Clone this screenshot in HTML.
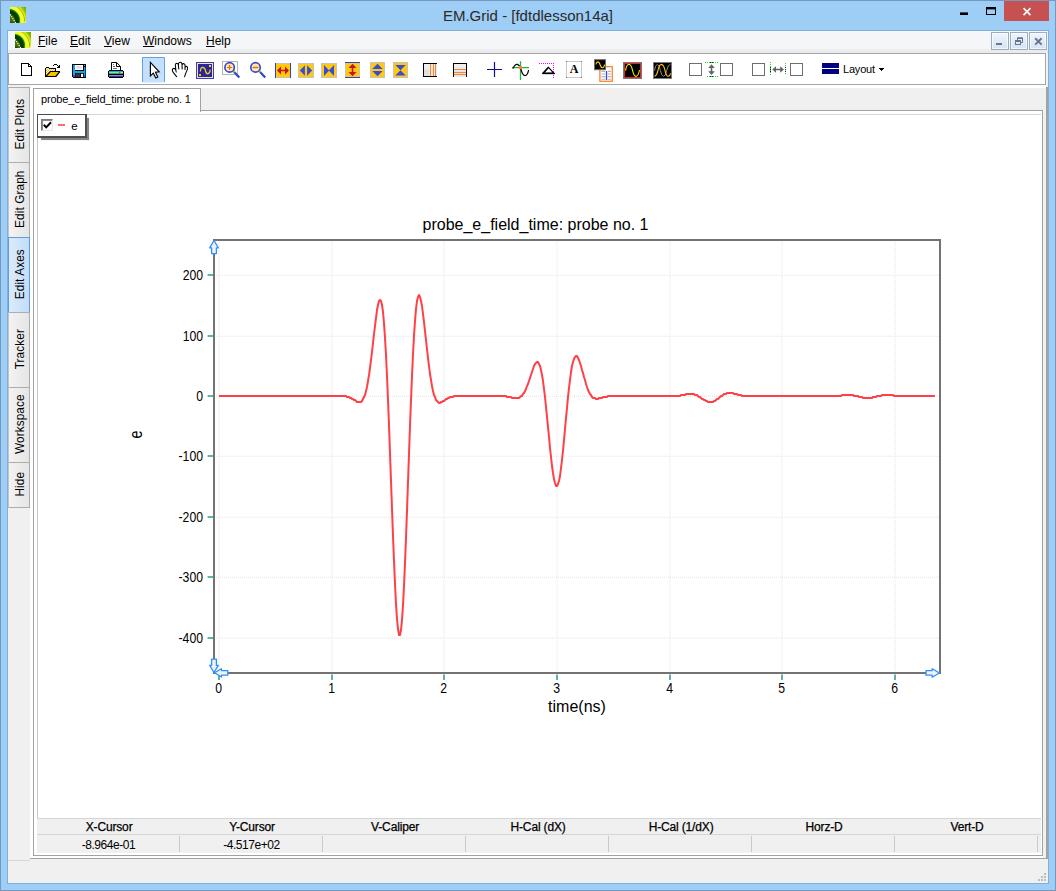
<!DOCTYPE html>
<html lang="en">
<head>
<meta charset="utf-8">
<title>EM.Grid - [fdtdlesson14a]</title>
<style>
*{box-sizing:border-box;margin:0;padding:0}
html,body{width:1056px;height:891px;overflow:hidden;background:#9ecdf5;font-family:"Liberation Sans",sans-serif;color:#000}
div,span,svg{position:absolute}
#frame{left:0;top:0;width:1056px;height:891px;border:1px solid #7399c0;background:#9ecdf5}
#frame2{left:7px;top:30px;width:1042px;height:854px;border:1px solid #82afd9}
#title{left:0;top:6px;color:#2a2a2a;width:1056px;text-align:center;font-size:15px;line-height:20px;white-space:nowrap}
#client{left:8px;top:31px;width:1040px;height:852px;background:#f0f0f0}
#menubar{left:8px;top:31px;width:1040px;height:22px;background:linear-gradient(#f5f6f7 0,#f5f6f7 18px,#eaebec 19px,#eaebec 22px)}
.mi{top:34px;font-size:12px;line-height:15px;white-space:nowrap}
.mi u{text-decoration:underline;text-underline-offset:1px}
.mdi{top:32px;width:18px;height:18px;border:1px solid #9dadc1;background:linear-gradient(#eff5fc,#d6e3f2);box-shadow:inset 0 0 0 1px rgba(255,255,255,0.65)}
#toolbar{left:8px;top:53px;width:1038px;height:32px;background:#fff;border:1px solid #a6a6a6}
#tbr{left:1046px;top:53px;width:2px;height:33px;background:#f4f3f2}
#mdiwhite{left:30px;top:85px;width:1016px;height:773px;background:#fff}
#mdiright{left:1046px;top:87px;width:2px;height:772px;background:#a2a2a2}
#mdibottom{left:30px;top:858px;width:1018px;height:1px;background:#a2a2a2}
.vtab{left:8px;width:22px;border:1px solid #adadad;border-left-color:#c4c4c4;background:linear-gradient(90deg,#f3f3f3,#e5e5e5)}
.vtab.sel{border-color:#5c9de3;background:linear-gradient(90deg,#dcebfc,#c3dcf9)}
.vtab span{left:50%;top:50%;white-space:nowrap;font-size:13.5px;line-height:14px;transform:translate(-50%,-50%) translate(1.2px,-0.8px) rotate(-90deg) scaleX(0.875);letter-spacing:0.1px}
#tabstrip{left:201px;top:88px;width:845px;height:23px;background:#f0f0f0}
#tabstripb{left:201px;top:110px;width:842px;height:1px;background:#a2a2a2}
#pagesideR{left:1043px;top:110px;width:3px;height:748px;background:#f1f1f1}
#toptab{left:33px;top:88px;width:168px;height:24px;background:#fff;border:1px solid #a2a2a2;border-bottom:none}
#toptab span{left:7px;top:3px;font-size:11px;line-height:14px;white-space:nowrap;letter-spacing:-0.18px}
#pageL{left:33px;top:111px;width:1px;height:745px;background:#a2a2a2}
#pageR{left:1042px;top:110px;width:1px;height:746px;background:#a2a2a2}
#pageB{left:33px;top:855px;width:1010px;height:1px;background:#a2a2a2}
#graph{left:37px;top:114px;width:1004px;height:704px;background:#fff;border-top:1px solid #d6d6d6;border-left:1px solid #c6c6c6}
#legend{left:37px;top:114px;width:50px;height:24px;background:#fff;border:1px solid #4e4e4e;border-right-width:2px;border-bottom-width:2px;}
.lsh{background:#858585;box-shadow:0 0 1px #a8a8a8}
#cb{left:3px;top:4px;width:12px;height:12px;background:#fff;border:1px solid #7a7a7a;border-right-color:#e8e8e8;border-bottom-color:#e8e8e8;box-shadow:inset 1px 1px 0 #8a8a8a}
#ldash{left:19.5px;top:9.3px;width:7px;height:2px;background:#ff6b6b}
#le{left:33.2px;top:2.6px;font-size:11.5px;line-height:16px}
#tblhead{left:37px;top:818px;width:1004px;height:17px;background:#f0f0f0;border-top:1px solid #d5d5d5;border-bottom:1px solid #d5d5d5}
#tblrow{left:37px;top:835px;width:1004px;height:18px;background:#f0f0f0}
.th{top:820px;width:143px;text-align:center;font-size:12px;line-height:14px;white-space:nowrap;-webkit-text-stroke:0.25px #000;margin-left:0.6px;letter-spacing:-0.15px}
.td{top:838px;width:143px;text-align:center;font-size:12px;line-height:14px;white-space:nowrap;letter-spacing:-0.45px}
.sep{top:836px;width:1px;height:16px;background:#c9c9c9}
#status{left:8px;top:859px;width:1040px;height:24px;background:#f0f0f0}
#statusline{left:8px;top:860px;width:22px;height:1px;background:#d7d7d7}
#layout{left:843px;top:62px;font-size:11px;line-height:14px;letter-spacing:-0.2px;white-space:nowrap}
#iconA{left:566px;top:61px;width:16px;height:17px;text-align:center;font-family:"Liberation Serif",serif;font-weight:bold;font-size:12px;line-height:17px}
</style>
</head>
<body>
<div id="frame"></div><div id="frame2"></div>
<svg style="left:10px;top:7px" width="16" height="16" viewBox="0 0 16 16">
<defs><radialGradient id="ig1" gradientUnits="userSpaceOnUse" cx="-1.600" cy="13.500" r="22.500">
<stop offset="0" stop-color="#4c7c00"/><stop offset="0.26" stop-color="#426e00"/><stop offset="0.32" stop-color="#0a4000"/><stop offset="0.44" stop-color="#033800"/>
<stop offset="0.475" stop-color="#0c6800"/><stop offset="0.505" stop-color="#24a400"/><stop offset="0.535" stop-color="#d8f020"/><stop offset="0.57" stop-color="#fcfc34"/><stop offset="0.675" stop-color="#f4f82c"/>
<stop offset="0.715" stop-color="#98c000"/><stop offset="0.745" stop-color="#dcf028"/><stop offset="0.79" stop-color="#b4de08"/><stop offset="0.85" stop-color="#8abe00"/><stop offset="1" stop-color="#6c9c00"/>
</radialGradient></defs>
<rect width="16" height="16" fill="url(#ig1)"/>
<path d="M0 7.300 L5.800 16" stroke="#fff" stroke-width="1.100" stroke-dasharray="1.300 1" fill="none"/>
<rect x="0" y="14.400" width="2.600" height="1.600" fill="#3a2c30" opacity="0.8"/>
<rect x="14.400" y="14" width="1.600" height="2" fill="#fff8c0" opacity="0.7"/>
</svg>
<div id="title">EM.Grid - [fdtdlesson14a]</div>
<svg style="left:950px;top:0" width="106" height="31" viewBox="950 0 106 31">
<rect x="960" y="12.4" width="8" height="2.6" fill="#000"/>
<rect x="986.5" y="8" width="9" height="6.5" fill="none" stroke="#000" stroke-width="1"/><rect x="986" y="7" width="10" height="2.4" fill="#000"/>
<rect x="1004" y="1" width="45" height="20" fill="#c75050"/>
<path d="M1023.500 8.200 L1030.500 15.100 M1030.500 8.200 L1023.500 15.100" stroke="#fff" stroke-width="1.650" fill="none"/>
</svg>
<div id="client"></div>
<div id="menubar"></div>
<svg style="left:15px;top:32px" width="16" height="16" viewBox="0 0 16 16">
<defs><radialGradient id="ig2" gradientUnits="userSpaceOnUse" cx="-1.600" cy="13.500" r="22.500">
<stop offset="0" stop-color="#4c7c00"/><stop offset="0.26" stop-color="#426e00"/><stop offset="0.32" stop-color="#0a4000"/><stop offset="0.44" stop-color="#033800"/>
<stop offset="0.475" stop-color="#0c6800"/><stop offset="0.505" stop-color="#24a400"/><stop offset="0.535" stop-color="#d8f020"/><stop offset="0.57" stop-color="#fcfc34"/><stop offset="0.675" stop-color="#f4f82c"/>
<stop offset="0.715" stop-color="#98c000"/><stop offset="0.745" stop-color="#dcf028"/><stop offset="0.79" stop-color="#b4de08"/><stop offset="0.85" stop-color="#8abe00"/><stop offset="1" stop-color="#6c9c00"/>
</radialGradient></defs>
<rect width="16" height="16" fill="url(#ig2)"/>
<path d="M0 7.300 L5.800 16" stroke="#fff" stroke-width="1.100" stroke-dasharray="1.300 1" fill="none"/>
<rect x="0" y="14.400" width="2.600" height="1.600" fill="#3a2c30" opacity="0.8"/>
<rect x="14.400" y="14" width="1.600" height="2" fill="#fff8c0" opacity="0.7"/>
</svg>
<span class="mi" style="left:38px"><u>F</u>ile</span>
<span class="mi" style="left:70px"><u>E</u>dit</span>
<span class="mi" style="left:104px"><u>V</u>iew</span>
<span class="mi" style="left:143px"><u>W</u>indows</span>
<span class="mi" style="left:206px"><u>H</u>elp</span>
<div class="mdi" style="left:991px"></div><div class="mdi" style="left:1010px"></div><div class="mdi" style="left:1029px"></div>
<svg style="left:990px;top:31px" width="58" height="20" viewBox="990 31 58 20">
<rect x="996" y="43" width="6" height="2" fill="#66778f"/>
<path d="M1017.500 40 V38 H1022.500 V42.500 H1021" fill="none" stroke="#66778f" stroke-width="1"/><rect x="1017" y="37.500" width="6" height="1.500" fill="#66778f"/>
<rect x="1015.500" y="40.500" width="5" height="4" fill="none" stroke="#66778f"/><rect x="1015" y="40" width="6" height="2" fill="#66778f"/>
<path d="M1035.200 38.200 L1041.600 44.600 M1041.600 38.200 L1035.200 44.600" stroke="#66778f" stroke-width="2" fill="none"/>
</svg>
<div id="toolbar"></div><div id="tbr"></div>
<div id="mdiwhite"></div><div id="mdiright"></div><div id="mdibottom"></div>
<div class="vtab" style="top:87px;height:76px"><span>Edit Plots</span></div>
<div class="vtab" style="top:162px;height:76px"><span>Edit Graph</span></div>
<div class="vtab sel" style="top:237px;height:76px"><span>Edit Axes</span></div>
<div class="vtab" style="top:312px;height:76px"><span>Tracker</span></div>
<div class="vtab" style="top:387px;height:76px"><span>Workspace</span></div>
<div class="vtab" style="top:462px;height:46px"><span>Hide</span></div>
<div id="tabstrip"></div><div id="tabstripb"></div><div id="pagesideR"></div>
<div id="toptab"><span>probe_e_field_time: probe no. 1</span></div>
<div id="pageL"></div><div id="pageR"></div><div id="pageB"></div>
<div id="graph"></div>
<div id="tblhead"></div><div id="tblrow"></div>
<span class="th" style="left:37px">X-Cursor</span>
<span class="td" style="left:37px">-8.964e-01</span>
<div class="sep" style="left:179px"></div>
<span class="th" style="left:180px">Y-Cursor</span>
<span class="td" style="left:180px">-4.517e+02</span>
<div class="sep" style="left:322px"></div>
<span class="th" style="left:323px">V-Caliper</span>
<div class="sep" style="left:465px"></div>
<span class="th" style="left:466px">H-Cal (dX)</span>
<div class="sep" style="left:608px"></div>
<span class="th" style="left:609px">H-Cal (1/dX)</span>
<div class="sep" style="left:751px"></div>
<span class="th" style="left:752px">Horz-D</span>
<div class="sep" style="left:894px"></div>
<span class="th" style="left:895px">Vert-D</span>
<div class="sep" style="left:1037px"></div>
<div id="status"></div><div id="statusline"></div>
<svg style="left:1036px;top:871px" width="12" height="12" viewBox="1036 871 12 12" shape-rendering="crispEdges"><rect x="1044" y="879" width="2" height="2" fill="#bdbdbd"/><rect x="1041" y="879" width="2" height="2" fill="#bdbdbd"/><rect x="1038" y="879" width="2" height="2" fill="#bdbdbd"/><rect x="1044" y="876" width="2" height="2" fill="#bdbdbd"/><rect x="1041" y="876" width="2" height="2" fill="#bdbdbd"/><rect x="1044" y="873" width="2" height="2" fill="#bdbdbd"/></svg>
<svg id="chart" style="left:0;top:114px" width="1056" height="704" viewBox="0 114 1056 704" font-family="Liberation Sans, sans-serif"><line x1="219" y1="242" x2="219" y2="672" stroke="#e4e4e4" stroke-width="1" stroke-dasharray="1 1"/><line x1="332" y1="242" x2="332" y2="672" stroke="#e4e4e4" stroke-width="1" stroke-dasharray="1 1"/><line x1="444" y1="242" x2="444" y2="672" stroke="#e4e4e4" stroke-width="1" stroke-dasharray="1 1"/><line x1="557" y1="242" x2="557" y2="672" stroke="#e4e4e4" stroke-width="1" stroke-dasharray="1 1"/><line x1="670" y1="242" x2="670" y2="672" stroke="#e4e4e4" stroke-width="1" stroke-dasharray="1 1"/><line x1="782" y1="242" x2="782" y2="672" stroke="#e4e4e4" stroke-width="1" stroke-dasharray="1 1"/><line x1="895" y1="242" x2="895" y2="672" stroke="#e4e4e4" stroke-width="1" stroke-dasharray="1 1"/><line x1="216" y1="275.2" x2="939" y2="275.2" stroke="#e4e4e4" stroke-width="1" stroke-dasharray="1 1"/><line x1="216" y1="336.2" x2="939" y2="336.2" stroke="#e4e4e4" stroke-width="1" stroke-dasharray="1 1"/><line x1="216" y1="396.2" x2="939" y2="396.2" stroke="#e4e4e4" stroke-width="1" stroke-dasharray="1 1"/><line x1="216" y1="456.2" x2="939" y2="456.2" stroke="#e4e4e4" stroke-width="1" stroke-dasharray="1 1"/><line x1="216" y1="517.2" x2="939" y2="517.2" stroke="#e4e4e4" stroke-width="1" stroke-dasharray="1 1"/><line x1="216" y1="577.2" x2="939" y2="577.2" stroke="#e4e4e4" stroke-width="1" stroke-dasharray="1 1"/><line x1="216" y1="638.2" x2="939" y2="638.2" stroke="#e4e4e4" stroke-width="1" stroke-dasharray="1 1"/><rect x="214" y="240" width="726" height="433" fill="none" stroke="#737373" stroke-width="2"/><line x1="219" y1="674.500" x2="219" y2="680" stroke="#62b1ab" stroke-width="2"/><line x1="332" y1="674.500" x2="332" y2="680" stroke="#62b1ab" stroke-width="2"/><line x1="444" y1="674.500" x2="444" y2="680" stroke="#62b1ab" stroke-width="2"/><line x1="557" y1="674.500" x2="557" y2="680" stroke="#62b1ab" stroke-width="2"/><line x1="670" y1="674.500" x2="670" y2="680" stroke="#62b1ab" stroke-width="2"/><line x1="782" y1="674.500" x2="782" y2="680" stroke="#62b1ab" stroke-width="2"/><line x1="895" y1="674.500" x2="895" y2="680" stroke="#62b1ab" stroke-width="2"/><line x1="207.600" y1="275" x2="213" y2="275" stroke="#62b1ab" stroke-width="2"/><line x1="207.600" y1="336" x2="213" y2="336" stroke="#62b1ab" stroke-width="2"/><line x1="207.600" y1="396" x2="213" y2="396" stroke="#62b1ab" stroke-width="2"/><line x1="207.600" y1="456" x2="213" y2="456" stroke="#62b1ab" stroke-width="2"/><line x1="207.600" y1="517" x2="213" y2="517" stroke="#62b1ab" stroke-width="2"/><line x1="207.600" y1="577" x2="213" y2="577" stroke="#62b1ab" stroke-width="2"/><line x1="207.600" y1="638" x2="213" y2="638" stroke="#62b1ab" stroke-width="2"/><text transform="translate(218.6 692.800) scale(0.94 1.07)" font-size="13" text-anchor="middle">0</text><text transform="translate(331.6 692.800) scale(0.94 1.07)" font-size="13" text-anchor="middle">1</text><text transform="translate(443.6 692.800) scale(0.94 1.07)" font-size="13" text-anchor="middle">2</text><text transform="translate(556.6 692.800) scale(0.94 1.07)" font-size="13" text-anchor="middle">3</text><text transform="translate(669.6 692.800) scale(0.94 1.07)" font-size="13" text-anchor="middle">4</text><text transform="translate(781.6 692.800) scale(0.94 1.07)" font-size="13" text-anchor="middle">5</text><text transform="translate(894.6 692.800) scale(0.94 1.07)" font-size="13" text-anchor="middle">6</text><text transform="translate(203 280.0) scale(0.94 1.07)" font-size="13" text-anchor="end">200</text><text transform="translate(203 341.0) scale(0.94 1.07)" font-size="13" text-anchor="end">100</text><text transform="translate(203 401.0) scale(0.94 1.07)" font-size="13" text-anchor="end">0</text><text transform="translate(203 461.0) scale(0.94 1.07)" font-size="13" text-anchor="end">-100</text><text transform="translate(203 522.0) scale(0.94 1.07)" font-size="13" text-anchor="end">-200</text><text transform="translate(203 582.0) scale(0.94 1.07)" font-size="13" text-anchor="end">-300</text><text transform="translate(203 643.0) scale(0.94 1.07)" font-size="13" text-anchor="end">-400</text><text x="535.500" y="229.700" font-size="16" text-anchor="middle">probe_e_field_time: probe no. 1</text><text x="577" y="711.800" font-size="16" text-anchor="middle">time(ns)</text><text transform="translate(141.600 434.500) rotate(-90) scale(0.9 1.1)" font-size="16" text-anchor="middle">e</text><path d="M219 396 L346 396 L347 397 L349 397 L350 398 L351 398 L352 399 L353 399 L354 400 L355 400 L356 401 L357 402 L361 402 L362 401 L363 399 L364 397 L365 395 L366 391 L367 387 L368 381 L369 375 L370 368 L371 360 L372 352 L373 343 L374 334 L375 326 L376 318 L377 310 L378 305 L379 301 L380 300 L381 301 L382 305 L383 312 L384 323 L385 338 L386 355 L387 376 L388 400 L389 425 L390 453 L391 481 L392 509 L393 536 L394 561 L395 584 L396 604 L397 619 L398 629 L399 635 L400 635 L401 630 L402 620 L403 605 L404 586 L405 563 L406 538 L407 511 L408 482 L409 454 L410 426 L411 400 L412 376 L413 354 L414 336 L415 321 L416 309 L417 301 L418 297 L419 295 L420 297 L421 301 L422 306 L423 314 L424 322 L425 331 L426 340 L427 349 L428 358 L429 366 L430 374 L431 380 L432 386 L433 391 L434 395 L435 397 L436 400 L437 401 L438 402 L439 403 L440 403 L441 402 L442 402 L443 401 L444 401 L445 400 L446 399 L447 399 L448 398 L449 398 L450 397 L453 397 L454 396 L506 396 L507 397 L511 397 L512 398 L519 398 L520 397 L521 396 L522 396 L523 394 L524 393 L525 391 L526 389 L527 386 L528 384 L529 381 L530 378 L531 375 L532 372 L533 369 L534 366 L535 364 L536 363 L537 362 L538 362 L539 364 L540 366 L541 370 L542 375 L543 381 L544 389 L545 397 L546 407 L547 417 L548 427 L549 437 L550 448 L551 457 L552 466 L553 473 L554 479 L555 483 L556 486 L557 486 L558 484 L559 481 L560 476 L561 468 L562 460 L563 451 L564 440 L565 429 L566 418 L567 408 L568 397 L569 388 L570 380 L571 372 L572 366 L573 362 L574 359 L575 357 L576 356 L577 356 L578 358 L579 360 L580 363 L581 366 L582 370 L583 373 L584 377 L585 380 L586 384 L587 387 L588 390 L589 392 L590 394 L591 395 L592 397 L593 398 L595 398 L596 399 L598 399 L599 398 L602 398 L603 397 L607 397 L608 396 L680 396 L681 395 L685 395 L686 394 L694 394 L695 395 L697 395 L698 396 L699 397 L700 397 L701 398 L702 399 L703 399 L704 400 L705 400 L706 401 L707 401 L708 402 L713 402 L714 401 L715 401 L716 400 L717 399 L718 399 L719 398 L720 397 L721 396 L722 396 L723 395 L724 394 L726 394 L727 393 L733 393 L734 394 L737 394 L738 395 L741 395 L742 396 L841 396 L842 395 L853 395 L854 396 L858 396 L859 397 L862 397 L863 398 L872 398 L873 397 L876 397 L877 396 L881 396 L882 395 L893 395 L894 396 L935 396" fill="none" stroke="#ff4046" stroke-width="2" stroke-linejoin="round"/><path d="M214 240.500 L218.300 247.800 H216.400 V253.600 H211.600 V247.800 H209.700 Z" stroke="#2e8fff" stroke-width="1.3" fill="#f2f2f2" stroke-linejoin="round"/><path d="M214 672.500 L209.700 665.400 H211.600 V659.200 H216.400 V665.400 H218.300 Z" stroke="#2e8fff" stroke-width="1.3" fill="#f2f2f2" stroke-linejoin="round"/><path d="M214.500 672.800 L221.500 668.800 V670.600 H227.800 V675.200 H221.500 V677 Z" stroke="#2e8fff" stroke-width="1.3" fill="#f2f2f2" stroke-linejoin="round"/><path d="M939.500 673 L932.200 668.800 V670.600 H926 V675.200 H932.200 V677.200 Z" stroke="#2e8fff" stroke-width="1.3" fill="#f2f2f2" stroke-linejoin="round"/></svg>
<div class="lsh" style="left:87px;top:118px;width:2.400px;height:21.500px"></div><div class="lsh" style="left:41px;top:137px;width:48.400px;height:2.500px"></div>
<div id="legend"><div id="cb"></div><svg style="left:4px;top:5px" width="11" height="11" viewBox="0 0 11 11"><path d="M1.800 4.800 L4.200 7.400 L9 2.200" stroke="#000" stroke-width="2" fill="none"/></svg><div id="ldash"></div><span id="le">e</span></div>
<svg id="tbicons" style="left:8px;top:54px" width="1038" height="30" viewBox="8 54 1038 30">
<g shape-rendering="crispEdges"><path d="M21.500 63.500 H28.500 L31.500 66.500 V75.500 H21.500 Z" fill="#fff" stroke="#000"/><path d="M28.500 63.500 V66.500 H31.500" fill="none" stroke="#000"/></g>
<defs><pattern id="chk" width="2" height="2" patternUnits="userSpaceOnUse"><rect width="2" height="2" fill="#fff"/><rect x="0" y="0" width="1" height="1" fill="#f8c400"/><rect x="1" y="1" width="1" height="1" fill="#f8c400"/></pattern></defs>
<g>
<path d="M46 68 H49 V69 H55 V71 H50 L46 75.500 Z" fill="url(#chk)" shape-rendering="crispEdges"/>
<path d="M50.200 72 H59.600 L55.700 76.200 H46.300 Z" fill="#f8c400"/>
<g shape-rendering="crispEdges" fill="#000"><rect x="46" y="67" width="3" height="1"/><rect x="49" y="68" width="7" height="1"/><rect x="45" y="68" width="1" height="9"/><rect x="55" y="69" width="1" height="3"/><rect x="50" y="71" width="10" height="1"/><rect x="45" y="76" width="11" height="1"/></g>
<path d="M50.300 71.700 L46 76.300" stroke="#000" stroke-width="1.200" fill="none"/>
<path d="M59.800 71.700 L55.800 76.500" stroke="#000" stroke-width="1.300" fill="none"/>
<g shape-rendering="crispEdges" fill="#000"><rect x="54" y="64" width="3" height="1"/><rect x="53" y="65" width="1" height="1"/><rect x="57" y="65" width="1" height="1"/><rect x="59" y="65" width="1" height="1"/><rect x="58" y="66" width="2" height="1"/><rect x="57" y="67" width="3" height="1"/></g>
</g>
<g shape-rendering="crispEdges">
<rect x="72" y="64" width="14" height="14" fill="#000"/><rect x="72" y="77" width="1" height="1" fill="#fff"/>
<rect x="73" y="65" width="2" height="12" fill="#08a8f0"/><rect x="84" y="67" width="1" height="10" fill="#08a8f0"/><rect x="73" y="71" width="12" height="2" fill="#08a8f0"/>
<rect x="73" y="75" width="2" height="2" fill="#4848e6"/><rect x="84" y="75" width="1" height="2" fill="#4848e6"/>
<rect x="75" y="65" width="8" height="5" fill="#fff"/><rect x="84" y="65" width="1" height="1" fill="#8c8c8c"/></g>
<rect x="76.300" y="66.200" width="5.400" height="2.400" fill="#dadada"/>
<rect x="85" y="67" width="0.400" height="10" fill="#08a8f0"/>
<rect x="75.400" y="73.400" width="4.700" height="3.600" fill="#343434"/><rect x="81" y="73.800" width="2.100" height="3.200" fill="#fff"/>
<g>
<path d="M111.500 70.500 V62.500 H116.600 L120.500 66.400 V70.500" fill="#fff" stroke="#000" stroke-width="1"/>
<path d="M116.500 62.500 V66.500 H120.500" fill="none" stroke="#000" stroke-width="1"/>
<g shape-rendering="crispEdges"><rect x="113" y="64" width="1" height="1" fill="#6c6c6c"/><rect x="113" y="66" width="2" height="1" fill="#6c6c6c"/><rect x="113" y="68" width="4" height="1" fill="#6c6c6c"/></g>
<path d="M109 70 H123 V71 H124 V77 H123 V78 H109 V77 H108 V71 H109 Z" fill="#000"/>
<g shape-rendering="crispEdges"><rect x="109" y="71" width="14" height="1" fill="#08b0f0"/>
<rect x="109" y="72" width="14" height="1" fill="#b4e81c"/><rect x="119" y="72" width="1" height="1" fill="#f02828"/><rect x="120" y="72" width="1" height="1" fill="#ff8a18"/><rect x="121" y="72" width="2" height="1" fill="#ffe000"/>
<rect x="109" y="73" width="14" height="1" fill="#08a4ec"/>
<rect x="109" y="75" width="14" height="1" fill="#7098dc"/>
<rect x="109" y="76" width="14" height="1" fill="#3434b4"/></g>
</g>
<rect x="142.500" y="57.500" width="22" height="25" fill="#c4e0fd" stroke="none"/>
<path d="M142.500 82 V57.500 H164.500 V82" fill="none" stroke="#62a3e6" stroke-width="1"/>
<path d="M150.400 62.400 V75.900 L153.300 73.200 L155.800 78 L157.800 77 L155.500 72.200 L159.200 71.800 Z" fill="#fff" stroke="#000" stroke-width="1.150" stroke-linejoin="miter"/>
<path d="M176.600 76.700 L173.200 72.400 Q171.400 69.600 173.300 68.500 Q174.800 68 175.800 70 L176.200 72 M175.900 70.400 L175.300 65 Q175.300 63.300 176.700 63.200 Q178.100 63.300 178.300 65 L178.800 69 M178.500 65 L178.500 63.500 Q179.200 62.100 180.500 62.300 Q181.900 62.600 182 64.100 L182.200 69 M182.100 64.800 Q182.700 63.400 184 63.700 Q185.200 64.200 185.100 65.700 L185 69.500 M185.100 67.300 Q185.900 66.100 186.900 66.500 Q187.900 67.100 187.500 69.100 L185.700 73.400 L184.600 76.700" fill="none" stroke="#000" stroke-width="1.050" stroke-linecap="round" stroke-linejoin="round"/>
<g>
<rect x="196.500" y="62.500" width="17" height="16" fill="#28289c" stroke="#3838d4" stroke-width="1" shape-rendering="crispEdges"/>
<rect x="197.500" y="63.500" width="15" height="14" fill="none" stroke="#f7e7a6" stroke-width="1" shape-rendering="crispEdges"/>
<path d="M200.400 71 Q200.600 67.300 202.800 67.300 Q204.800 67.400 205.400 70.400 Q206 73.800 207.700 73.800 Q209.800 73.700 210.100 70.200" fill="none" stroke="#ffcc12" stroke-width="1.250" stroke-linecap="round"/>
<rect x="209" y="65" width="2" height="2" fill="#ffcc12"/><rect x="199" y="74" width="2" height="2" fill="#ffcc12"/>
</g>
<rect x="222.500" y="61.500" width="15" height="13" fill="none" stroke="#b6b6b6" shape-rendering="crispEdges"/>
<path d="M233.2 71 L239.3 77.400" stroke="#3444cc" stroke-width="2.200" fill="none"/>
<path d="M232.9 70.700 L234.5 72.300" stroke="#a8d400" stroke-width="2" fill="none"/>
<circle cx="229.6" cy="67.400" r="4.700" fill="#f8edb6" stroke="#3a4ad0" stroke-width="1.700"/>
<path d="M227.0 67.500 H232.2 M229.5 64.900 V70.100" stroke="#ff6400" stroke-width="1.200" fill="none"/>
<path d="M259.1 71 L265.2 77.400" stroke="#3444cc" stroke-width="2.200" fill="none"/>
<path d="M258.8 70.700 L260.4 72.300" stroke="#a8d400" stroke-width="2" fill="none"/>
<circle cx="255.5" cy="67.400" r="4.700" fill="#f8edb6" stroke="#3a4ad0" stroke-width="1.700"/>
<path d="M252.7 67.500 H258.3" stroke="#ff6400" stroke-width="1.500" fill="none"/>
<rect x="275.500" y="63.500" width="15" height="14" fill="#ffc90e" stroke="#c3c3c3" shape-rendering="crispEdges"/>
<rect x="275" y="63" width="1" height="15" fill="#2c3ee0"/><rect x="290" y="63" width="1" height="15" fill="#2c3ee0"/>
<path d="M277 70.500 L281 66.500 V69.700 H285 V66.500 L289 70.500 L285 74.500 V71.300 H281 V74.500 Z" fill="#c4161c"/>
<rect x="298.500" y="63.500" width="15" height="14" fill="#ffc90e" stroke="#c3c3c3" shape-rendering="crispEdges"/>
<path d="M299.800 70.500 L304.900 65.300 V75.700 Z M312.200 70.500 L307.100 65.300 V75.700 Z" fill="#3a4bd8"/>
<rect x="321.500" y="63.500" width="15" height="14" fill="#ffc90e" stroke="#c3c3c3" shape-rendering="crispEdges"/>
<path d="M324 65 V76 L329.200 70.500 Z M334 65 V76 L328.800 70.500 Z" fill="#3a4bd8"/>
<rect x="345.500" y="62.500" width="14" height="15" fill="#ffc90e" stroke="#c3c3c3" shape-rendering="crispEdges"/>
<rect x="345" y="62" width="15" height="1" fill="#2c3ee0"/><rect x="345" y="77" width="15" height="1" fill="#2c3ee0"/>
<path d="M352.500 63.800 L356.500 68 H353.300 V72 H356.500 L352.500 76.200 L348.500 72 H351.700 V68 H348.500 Z" fill="#c4161c"/>
<rect x="370.500" y="62.500" width="14" height="15" fill="#ffc90e" stroke="#c3c3c3" shape-rendering="crispEdges"/>
<path d="M377.500 63.800 L382.700 68.900 H372.300 Z M377.500 76.200 L382.700 71.100 H372.300 Z" fill="#3a4bd8"/>
<rect x="393.500" y="62.500" width="14" height="15" fill="#ffc90e" stroke="#c3c3c3" shape-rendering="crispEdges"/>
<path d="M395.300 65 H405.700 L400.500 70.300 Z M395.300 75.500 H405.700 L400.500 70.200 Z" fill="#3a4bd8"/>
<defs><linearGradient id="gg" x1="0" y1="0" x2="0" y2="1"><stop offset="0" stop-color="#f2f2f2"/><stop offset="0.5" stop-color="#e8e8e8"/><stop offset="0.51" stop-color="#dcdcdc"/><stop offset="1" stop-color="#e4e4e4"/></linearGradient></defs>
<g shape-rendering="crispEdges">
<rect x="424" y="64" width="13" height="12" fill="url(#gg)"/><rect x="429" y="64" width="8" height="12" fill="#e9eef3" opacity="0.7"/>
<path d="M437 63.500 H423.500 V76.500 H437" fill="none" stroke="#000" stroke-width="1"/>
<path d="M430.500 64 V76 M433.500 64 V76 M435.500 64 V76" stroke="#ff8425" stroke-width="1"/>
<rect x="454" y="64" width="12" height="13" fill="url(#gg)"/><rect x="454" y="69" width="12" height="7" fill="#e4eaf0" opacity="0.7"/>
<path d="M453.500 77 V63.500 H466.500 V77" fill="none" stroke="#000" stroke-width="1"/>
<path d="M454 69.500 H466 M454 72.500 H466 M454 74.500 H466" stroke="#ff8425" stroke-width="1"/>
</g>
<path d="M487 69.500 H502 M494.500 62 V77" stroke="#10108c" stroke-width="1.200" fill="none"/>
<path d="M512 67.600 H529 M520.500 61.200 V80" stroke="#22b14c" stroke-width="1.300" fill="none"/>
<path d="M512.800 68.600 Q515.200 63.500 517.600 64.400 Q519.600 65.500 520.600 68.200 Q522.400 75.600 525 75.600 Q527.600 75.400 528.600 70" fill="none" stroke="#000" stroke-width="1.250"/>
<rect x="519" y="66" width="3" height="3" fill="#ff7f27"/>
<path d="M539 63.500 H554" stroke="#ff00ff" stroke-width="1" stroke-dasharray="1 1" shape-rendering="crispEdges"/>
<path d="M553.500 63 V78" stroke="#ff00ff" stroke-width="1" stroke-dasharray="1 1" shape-rendering="crispEdges"/>
<path d="M548.500 67.400 L543.300 73.200 H553.800 Z" fill="none" stroke="#000" stroke-width="1.200" stroke-linejoin="miter"/><path d="M542.200 73.500 H554.800" stroke="#000" stroke-width="1.300"/><path d="M548.300 67.600 L543 73.300" stroke="#000" stroke-width="1.450"/>
<rect x="566.500" y="61.500" width="15" height="16" fill="#fff" stroke="#c8c8c8" shape-rendering="crispEdges"/>
<rect x="566" y="61" width="1" height="1" fill="#707070"/>
<rect x="581" y="61" width="1" height="1" fill="#707070"/>
<rect x="566" y="77" width="1" height="1" fill="#707070"/>
<rect x="581" y="77" width="1" height="1" fill="#707070"/>
<g>
<rect x="599.900" y="66.700" width="12.400" height="14.600" fill="#fff" stroke="#ff7f27" stroke-width="1.250"/>
<path d="M601.500 71.400 H605 M601.500 74 H605 M601.500 76.600 H605 M601.500 79.200 H605 M608 71.400 H611 M608 74 H611 M608 76.600 H611 M608 79.200 H611" stroke="#b4b4b4" stroke-width="1.100"/>
<path d="M606.500 71 V80" stroke="#3a48e0" stroke-width="1.400"/>
<rect x="594.500" y="59.700" width="11" height="10" fill="#000" stroke="#6c6c6c" stroke-width="1"/>
<path d="M595.800 64.300 Q596.600 61.700 598 61.900 Q599.500 62.200 600.200 65 Q601 67.800 602.500 67.800 Q604 67.700 604.600 64.600" fill="none" stroke="#ffd800" stroke-width="1.100"/>
</g>
<rect x="623.500" y="62.500" width="18" height="16" fill="#000" stroke="#747c7c" stroke-width="1" shape-rendering="crispEdges"/>
<rect x="624.500" y="63.500" width="16" height="14" fill="none" stroke="#e8202a" stroke-width="1" shape-rendering="crispEdges"/>
<path d="M625.600 70.600 Q626.500 64.200 629 64.200 Q631.300 64.300 632.500 70.200 Q633.800 76.400 636 76.400 Q638.300 76.300 639.500 70" fill="none" stroke="#f4f000" stroke-width="1.100"/>
<rect x="653.500" y="62.500" width="18" height="16" fill="#000" stroke="#7a7a7a" stroke-width="1" shape-rendering="crispEdges"/>
<path d="M654.500 70.500 Q655.200 64.500 657.300 64.500 Q659.300 64.600 660.400 70.400 Q661.500 76.300 663.600 76.300 Q665.700 76.200 666.700 70.400 Q667.800 64.600 670.500 64.400" fill="none" stroke="#8c8c8c" stroke-width="1"/>
<path d="M654.500 76.300 Q656.800 75.500 658 70.300 Q659.300 64.400 661.500 64.400 Q663.700 64.500 665 70.400 Q666.200 76.400 668.300 76.300 Q669.900 76.100 670.600 73.300" fill="none" stroke="#ffc20e" stroke-width="1.100"/>
<rect x="689.5" y="63.500" width="12" height="12" fill="#fff" stroke="#6e6e6e" shape-rendering="crispEdges"/>
<rect x="720.5" y="63.500" width="12" height="12" fill="#fff" stroke="#6e6e6e" shape-rendering="crispEdges"/>
<rect x="752.5" y="63.500" width="12" height="12" fill="#fff" stroke="#6e6e6e" shape-rendering="crispEdges"/>
<rect x="790.5" y="63.500" width="12" height="12" fill="#fff" stroke="#6e6e6e" shape-rendering="crispEdges"/>
<g shape-rendering="crispEdges"><path d="M705 62.500 H718" stroke="#22d822" stroke-width="1" stroke-dasharray="1 1"/><path d="M709 62.500 H714" stroke="#222" stroke-width="1" stroke-dasharray="1 1" stroke-dashoffset="1"/><path d="M707 76.500 H718" stroke="#22d822" stroke-width="1" stroke-dasharray="1 1"/><path d="M709 76.500 H714" stroke="#222" stroke-width="1" stroke-dasharray="1 1" stroke-dashoffset="1"/></g>
<path d="M711.500 64.300 L714.800 68 H712.300 V71.200 H714.800 L711.500 75 L708.200 71.200 H710.700 V68 H708.200 Z" fill="#646464"/>
<g shape-rendering="crispEdges"><path d="M770.500 62 V75" stroke="#22d822" stroke-width="1" stroke-dasharray="1 1"/><path d="M770.500 66 V72" stroke="#222" stroke-width="1" stroke-dasharray="1 1" stroke-dashoffset="1"/><path d="M785.500 63 V75" stroke="#22d822" stroke-width="1" stroke-dasharray="1 1"/><path d="M785.500 66 V72" stroke="#222" stroke-width="1" stroke-dasharray="1 1" stroke-dashoffset="1"/></g>
<path d="M772.300 69.500 L776 66.200 V68.700 H780.200 V66.200 L783.900 69.500 L780.200 72.800 V70.300 H776 V72.800 Z" fill="#646464"/>
<g shape-rendering="crispEdges"><rect x="822" y="63" width="17" height="5" fill="#000080"/><rect x="822" y="69" width="17" height="5" fill="#000080"/>
<rect x="879" y="68" width="5" height="1" fill="#000"/><rect x="880" y="69" width="3" height="1" fill="#000"/><rect x="881" y="70" width="1" height="1" fill="#000"/></g>
</svg>
<span id="layout">Layout</span><span id="iconA">A</span>
</body>
</html>
